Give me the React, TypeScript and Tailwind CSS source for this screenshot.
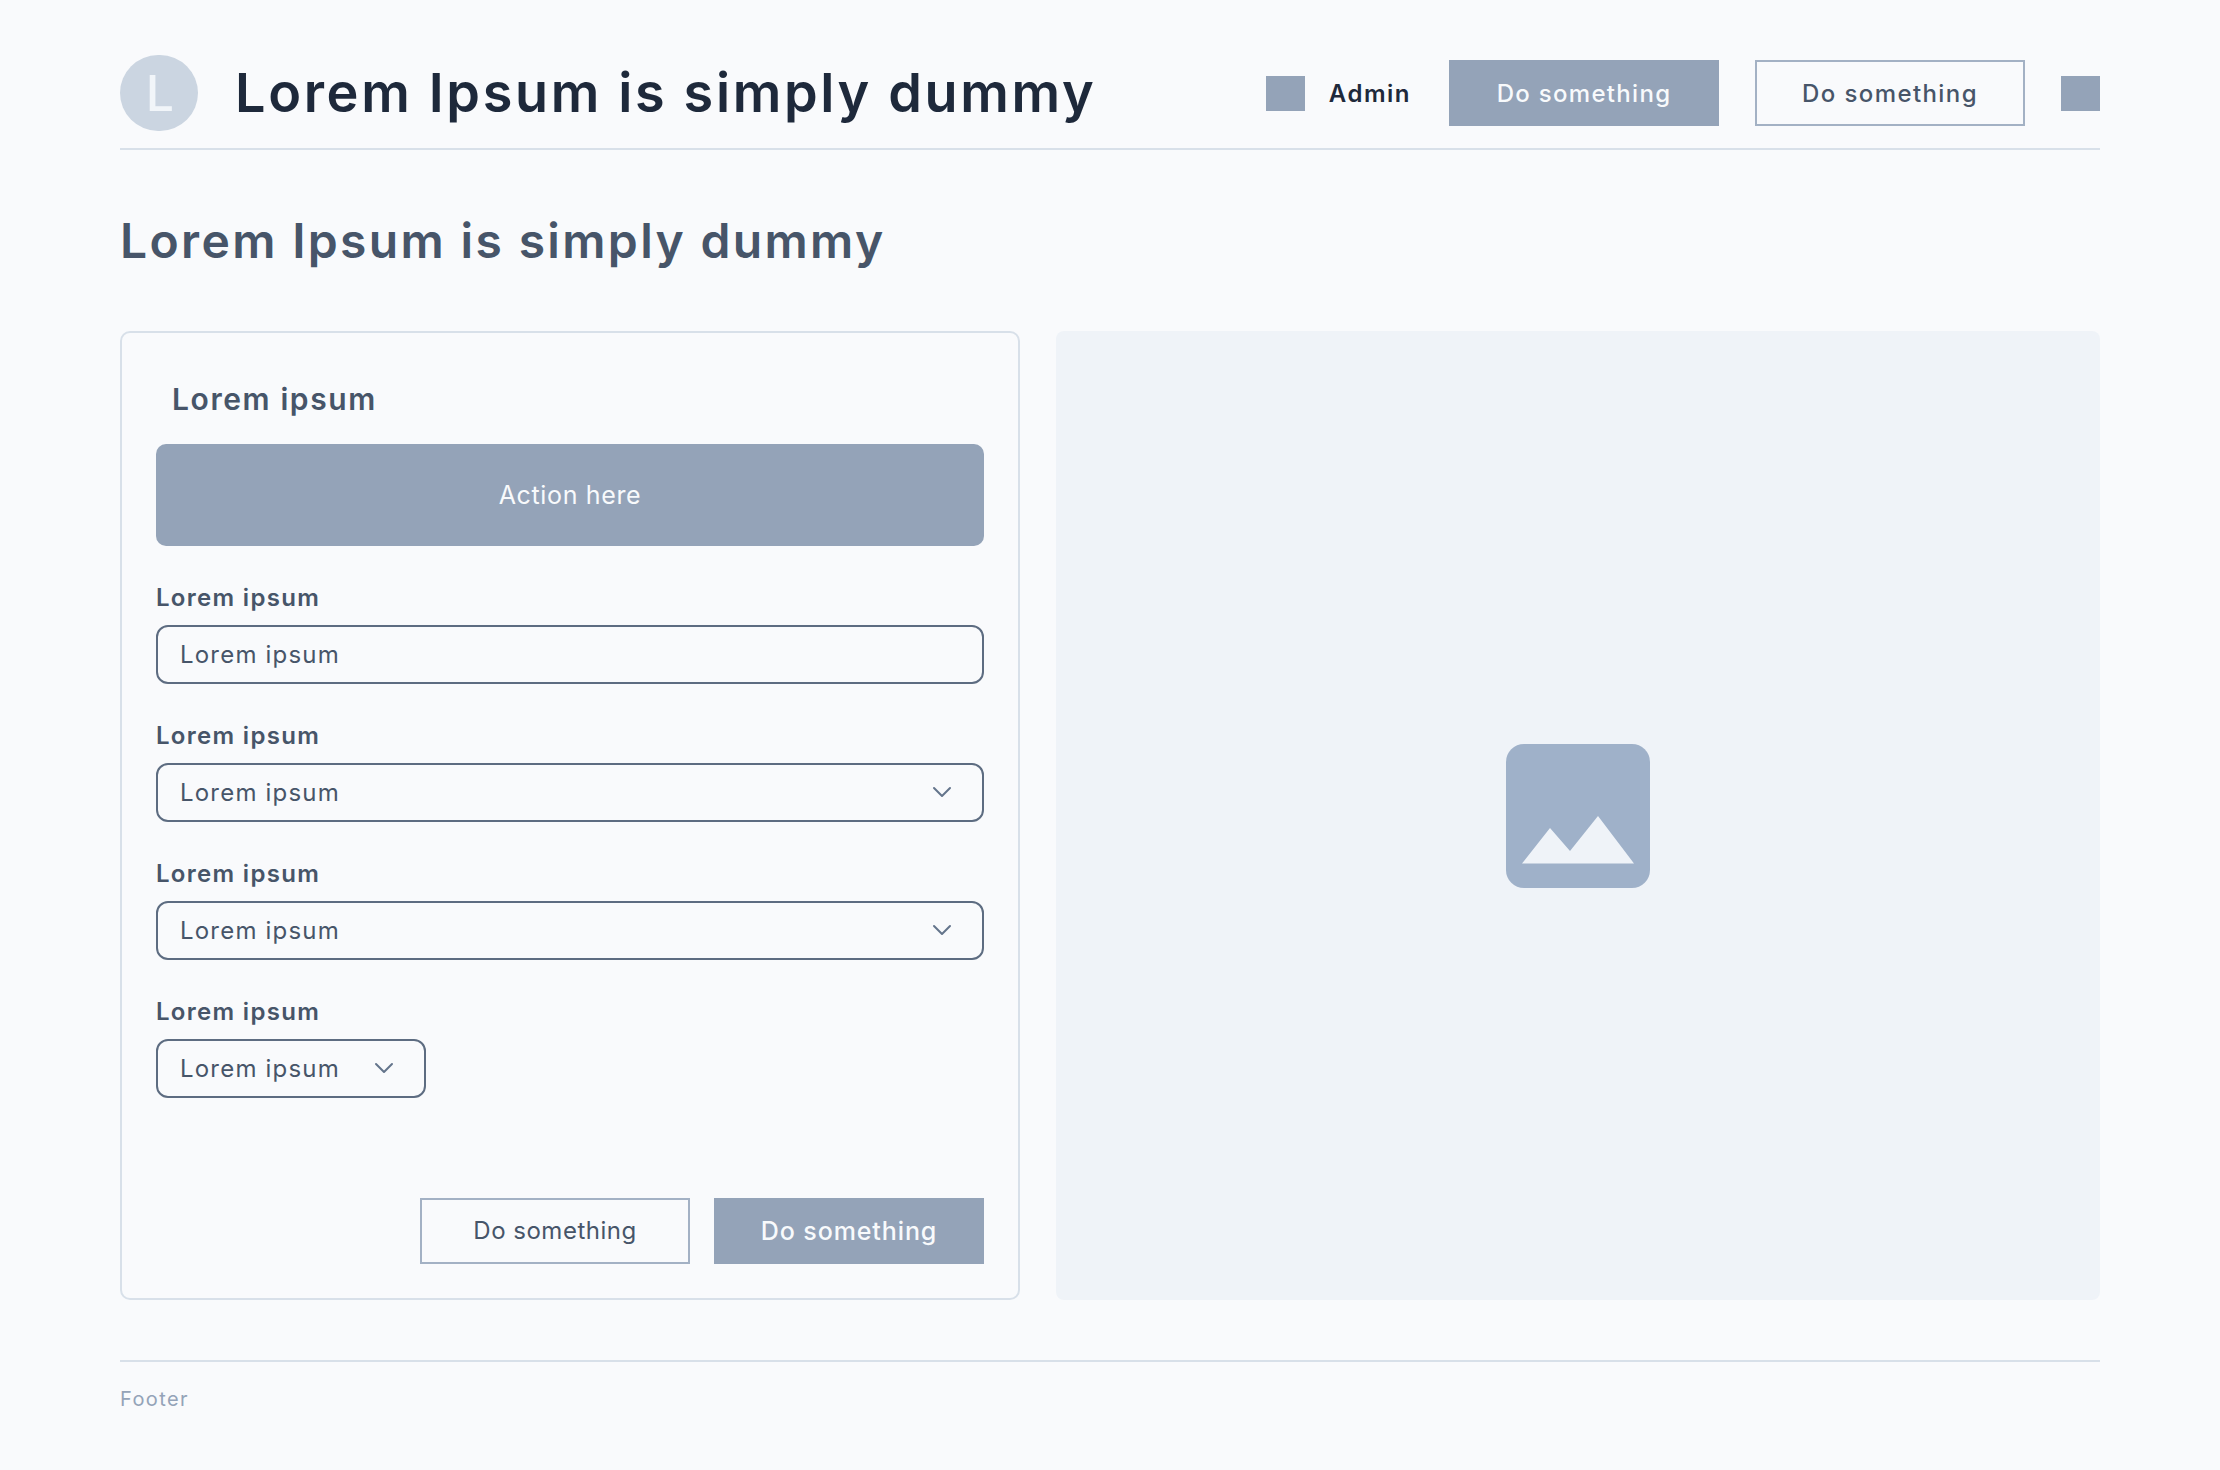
import { ChevronDown } from "lucide-react";

const Field = ({ label, select, small }: { label: string; select?: boolean; small?: boolean }) => (
  <div className="mt-[37px]">
    <div className="mb-3 text-[24px] leading-[30px] font-semibold tracking-[1.3px] text-[#475569]">{label}</div>
    <div
      className={`flex h-[59px] items-center justify-between rounded-xl border-2 border-[#5d6c81] pl-[22px] pr-[24px] text-[24px] text-[#475569] ${
        small ? "w-[270px]" : "w-full"
      }`}
    >
      <span className="tracking-[1.2px]">Lorem ipsum</span>
      {select && <ChevronDown className="-mt-[2px] h-[32px] w-[32px] text-[#64748b]" strokeWidth={1.5} />}
    </div>
  </div>
);

const App = () => {
  return (
    <div className="h-[1470px] bg-[#f9fafc] px-[120px] pt-[55px] font-['Inter',sans-serif]">
      <header className="flex h-[95px] items-start justify-between border-b-2 border-[#d8e0e9]">
        <div className="flex items-center gap-[37px]">
          <div className="flex h-[76px] w-[78px] items-center justify-center rounded-full bg-[#cbd5e1] pl-[2px] text-[50px] font-medium text-[#f1f5f9]">
            L
          </div>
          <h1 className="text-[54px] leading-[76px] font-semibold tracking-[2.65px] text-[#1e293b]">
            Lorem Ipsum is simply dummy
          </h1>
        </div>
        <div className="mt-[5px] flex items-center">
          <div className="h-[35px] w-[39px] bg-[#94a3b8]" />
          <span className="ml-6 pt-[1px] text-[24px] font-semibold tracking-[1.5px] text-[#1e293b]">Admin</span>
          <button className="ml-[38px] h-[66px] w-[270px] bg-[#94a3b8] pt-[2px] text-[24px] font-medium tracking-[1.3px] text-[#f8fafc]">
            Do something
          </button>
          <button className="ml-[36px] h-[66px] w-[270px] border-2 border-[#a3b1c4] pt-[1px] text-[24px] font-medium tracking-[1.4px] text-[#475569]">
            Do something
          </button>
          <div className="ml-[36px] h-[35px] w-[39px] bg-[#94a3b8]" />
        </div>
      </header>

      <h2 className="mt-[59px] text-[48px] leading-[64px] font-semibold tracking-[2.35px] text-[#475569]">
        Lorem Ipsum is simply dummy
      </h2>

      <main className="mt-[58px] flex h-[969px] gap-[36px]">
        <section className="flex w-[900px] flex-col rounded-[10px] border-2 border-[#d8e0e9] px-[34px] pt-[48px] pb-[34px]">
          <h3 className="pl-[16px] text-[30px] leading-[36px] font-semibold tracking-[1.6px] text-[#475569]">Lorem ipsum</h3>
          <button className="mt-[27px] h-[102px] w-full shrink-0 rounded-[10px] bg-[#94a3b8] pt-[1px] text-[25px] tracking-[0.65px] text-[#f8fafc]">
            Action here
          </button>
          <Field label="Lorem ipsum" />
          <Field label="Lorem ipsum" select />
          <Field label="Lorem ipsum" select />
          <Field label="Lorem ipsum" select small />
          <div className="mt-auto flex justify-end gap-6">
            <button className="h-[66px] w-[270px] border-2 border-[#a3b1c4] text-[24px] tracking-[0.5px] text-[#475569]">
              Do something
            </button>
            <button className="h-[66px] w-[270px] bg-[#94a3b8] pt-[1px] text-[25px] font-medium tracking-[0.9px] text-[#f8fafc]">
              Do something
            </button>
          </div>
        </section>

        <section className="flex flex-1 items-center justify-center rounded-lg bg-[#eff3f8]">
          <svg width="144" height="144" viewBox="0 0 144 144">
            <rect width="144" height="144" rx="18" fill="#9fb1c9" />
            <path d="M16 119.5 44 84 64 107 92 72 128 119.5Z" fill="#eff3f8" />
          </svg>
        </section>
      </main>

      <footer className="mt-[60px] border-t-2 border-[#d8e0e9] pt-[23px] text-[20px] leading-[28px] tracking-[1.4px] text-[#94a3b8]">
        Footer
      </footer>
    </div>
  );
};

export default App;
